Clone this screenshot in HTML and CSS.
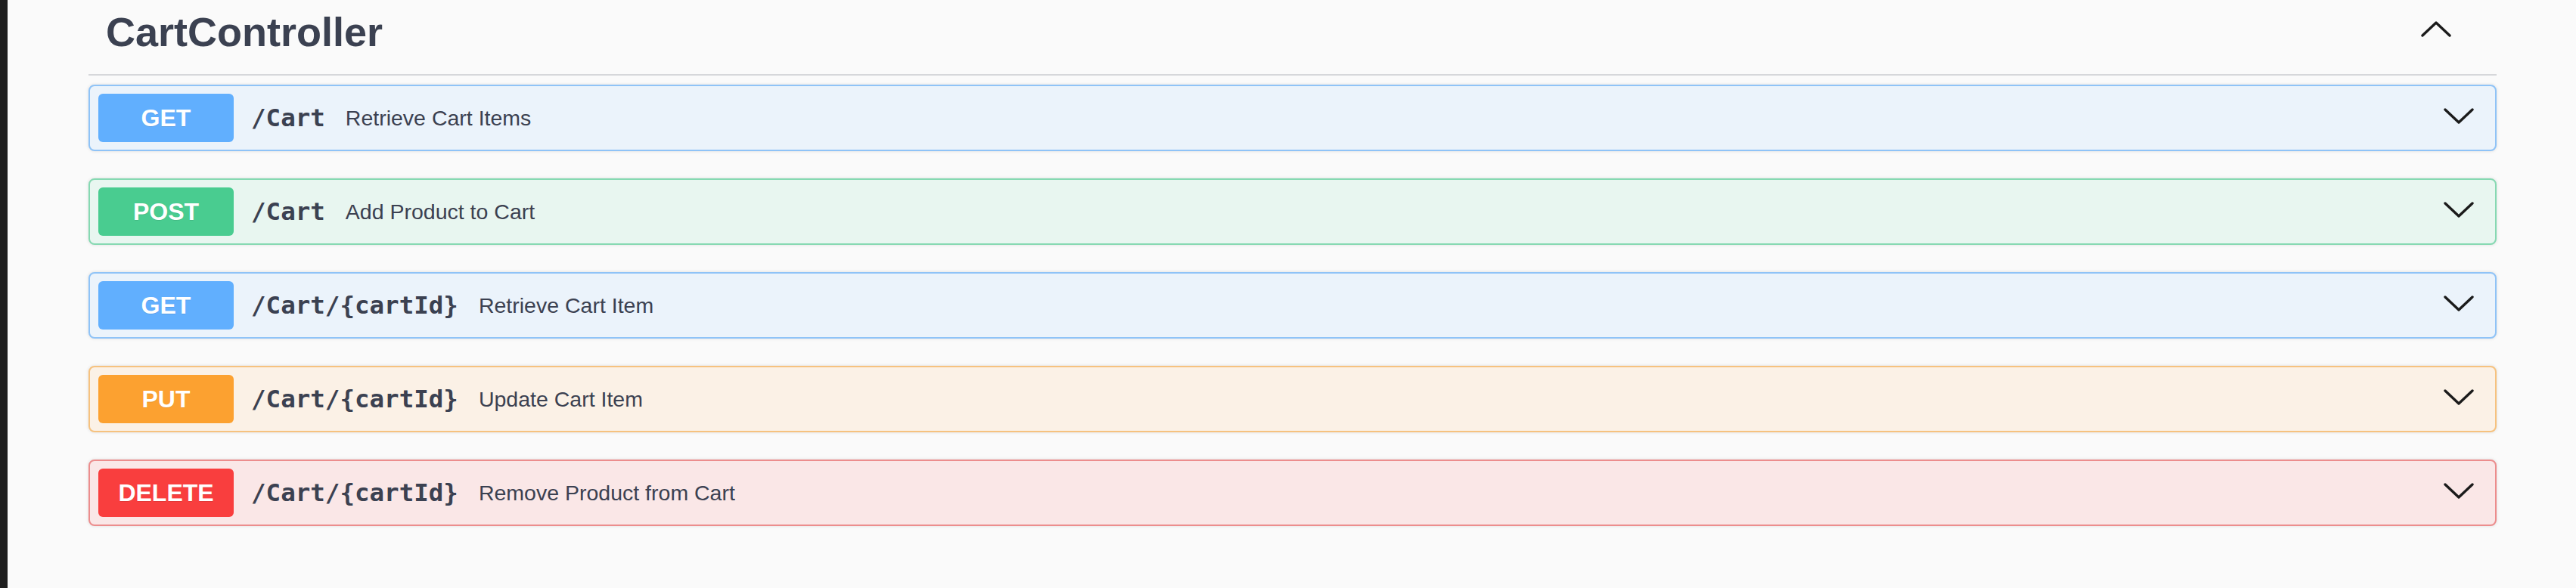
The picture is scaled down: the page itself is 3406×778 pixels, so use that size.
FILE: index.html
```html
<!DOCTYPE html>
<html lang="en">
<head>
<meta charset="utf-8">
<title>CartController</title>
<link rel="stylesheet" href="styles.css">
</head>
<body>
<div class="sidebar"></div>
<main class="content">
  <div class="tag-header">
    <h3 class="tag-title">CartController</h3>
    <svg class="tag-arrow" width="40" height="22" viewBox="0 0 40 22" aria-hidden="true">
      <polyline points="2,20 20,3 38,20" fill="none" stroke="#1b1b1b" stroke-width="3.4" stroke-linecap="round" stroke-linejoin="round"/>
    </svg>
  </div>
  <div class="ops">
    <div class="op op-get">
      <span class="method">GET</span>
      <span class="path">/Cart</span>
      <span class="desc">Retrieve Cart Items</span>
      <svg class="chev" width="40" height="22" viewBox="0 0 40 22" aria-hidden="true"><polyline points="2,2 20,19 38,2" fill="none" stroke="#1b1b1b" stroke-width="3.4" stroke-linecap="round" stroke-linejoin="round"/></svg>
    </div>
    <div class="op op-post">
      <span class="method">POST</span>
      <span class="path">/Cart</span>
      <span class="desc">Add Product to Cart</span>
      <svg class="chev" width="40" height="22" viewBox="0 0 40 22" aria-hidden="true"><polyline points="2,2 20,19 38,2" fill="none" stroke="#1b1b1b" stroke-width="3.4" stroke-linecap="round" stroke-linejoin="round"/></svg>
    </div>
    <div class="op op-get">
      <span class="method">GET</span>
      <span class="path">/Cart/{cartId}</span>
      <span class="desc">Retrieve Cart Item</span>
      <svg class="chev" width="40" height="22" viewBox="0 0 40 22" aria-hidden="true"><polyline points="2,2 20,19 38,2" fill="none" stroke="#1b1b1b" stroke-width="3.4" stroke-linecap="round" stroke-linejoin="round"/></svg>
    </div>
    <div class="op op-put">
      <span class="method">PUT</span>
      <span class="path">/Cart/{cartId}</span>
      <span class="desc">Update Cart Item</span>
      <svg class="chev" width="40" height="22" viewBox="0 0 40 22" aria-hidden="true"><polyline points="2,2 20,19 38,2" fill="none" stroke="#1b1b1b" stroke-width="3.4" stroke-linecap="round" stroke-linejoin="round"/></svg>
    </div>
    <div class="op op-delete">
      <span class="method">DELETE</span>
      <span class="path">/Cart/{cartId}</span>
      <span class="desc">Remove Product from Cart</span>
      <svg class="chev" width="40" height="22" viewBox="0 0 40 22" aria-hidden="true"><polyline points="2,2 20,19 38,2" fill="none" stroke="#1b1b1b" stroke-width="3.4" stroke-linecap="round" stroke-linejoin="round"/></svg>
    </div>
  </div>
</main>
</body>
</html>
```

FILE: styles.css
```css
html, body {
  margin: 0;
  padding: 0;
  height: 100%;
}

body {
  display: flex;
  background: #fafafa;
  font-family: "Liberation Sans", Arial, sans-serif;
  color: #3b4151;
}

.sidebar {
  width: 10px;
  flex: 0 0 10px;
  background: #1e1e1e;
}

.content {
  flex: 1;
  margin: 0 105px 0 107px;
}

.tag-header {
  display: flex;
  align-items: center;
  justify-content: space-between;
  padding: 10px 60px 24px 23px;
  border-bottom: 2px solid #d6d7da;
}

.tag-title {
  margin: 0;
  font-size: 54px;
  line-height: 64px;
  font-weight: 700;
  color: #3b4151;
}

.tag-arrow {
  display: block;
  margin-bottom: 8px;
}

.ops {
  margin-top: 12px;
}

.op {
  display: flex;
  align-items: center;
  padding: 10px 28px 10px 11px;
  margin-bottom: 36px;
  border: 2px solid;
  border-radius: 8px;
  box-shadow: 0 0 4px rgba(0, 0, 0, 0.12);
}

.method {
  width: 179px;
  height: 64px;
  line-height: 64px;
  border-radius: 6px;
  text-align: center;
  font-size: 32px;
  font-weight: 700;
  color: #fff;
  text-shadow: 0 1px 0 rgba(0, 0, 0, 0.1);
}

.path {
  margin-left: 23px;
  font-family: "DejaVu Sans Mono", "Liberation Mono", monospace;
  font-weight: 700;
  font-size: 32.5px;
  color: #3b4151;
}

.desc {
  margin-left: 27px;
  font-size: 28.5px;
  color: #3b4151;
}

.chev {
  display: block;
  margin-left: auto;
  margin-top: -4px;
}

.op-get {
  background: #ebf3fb;
  border-color: #8fc3f7;
}
.op-get .method { background: #61affe; }

.op-post {
  background: #e8f6f0;
  border-color: #86d9b2;
}
.op-post .method { background: #49cc90; }

.op-put {
  background: #fbf1e6;
  border-color: #f6c27f;
}
.op-put .method { background: #fca130; }

.op-delete {
  background: #fae7e7;
  border-color: #ec8d8d;
}
.op-delete .method { background: #f93e3e; }
```
